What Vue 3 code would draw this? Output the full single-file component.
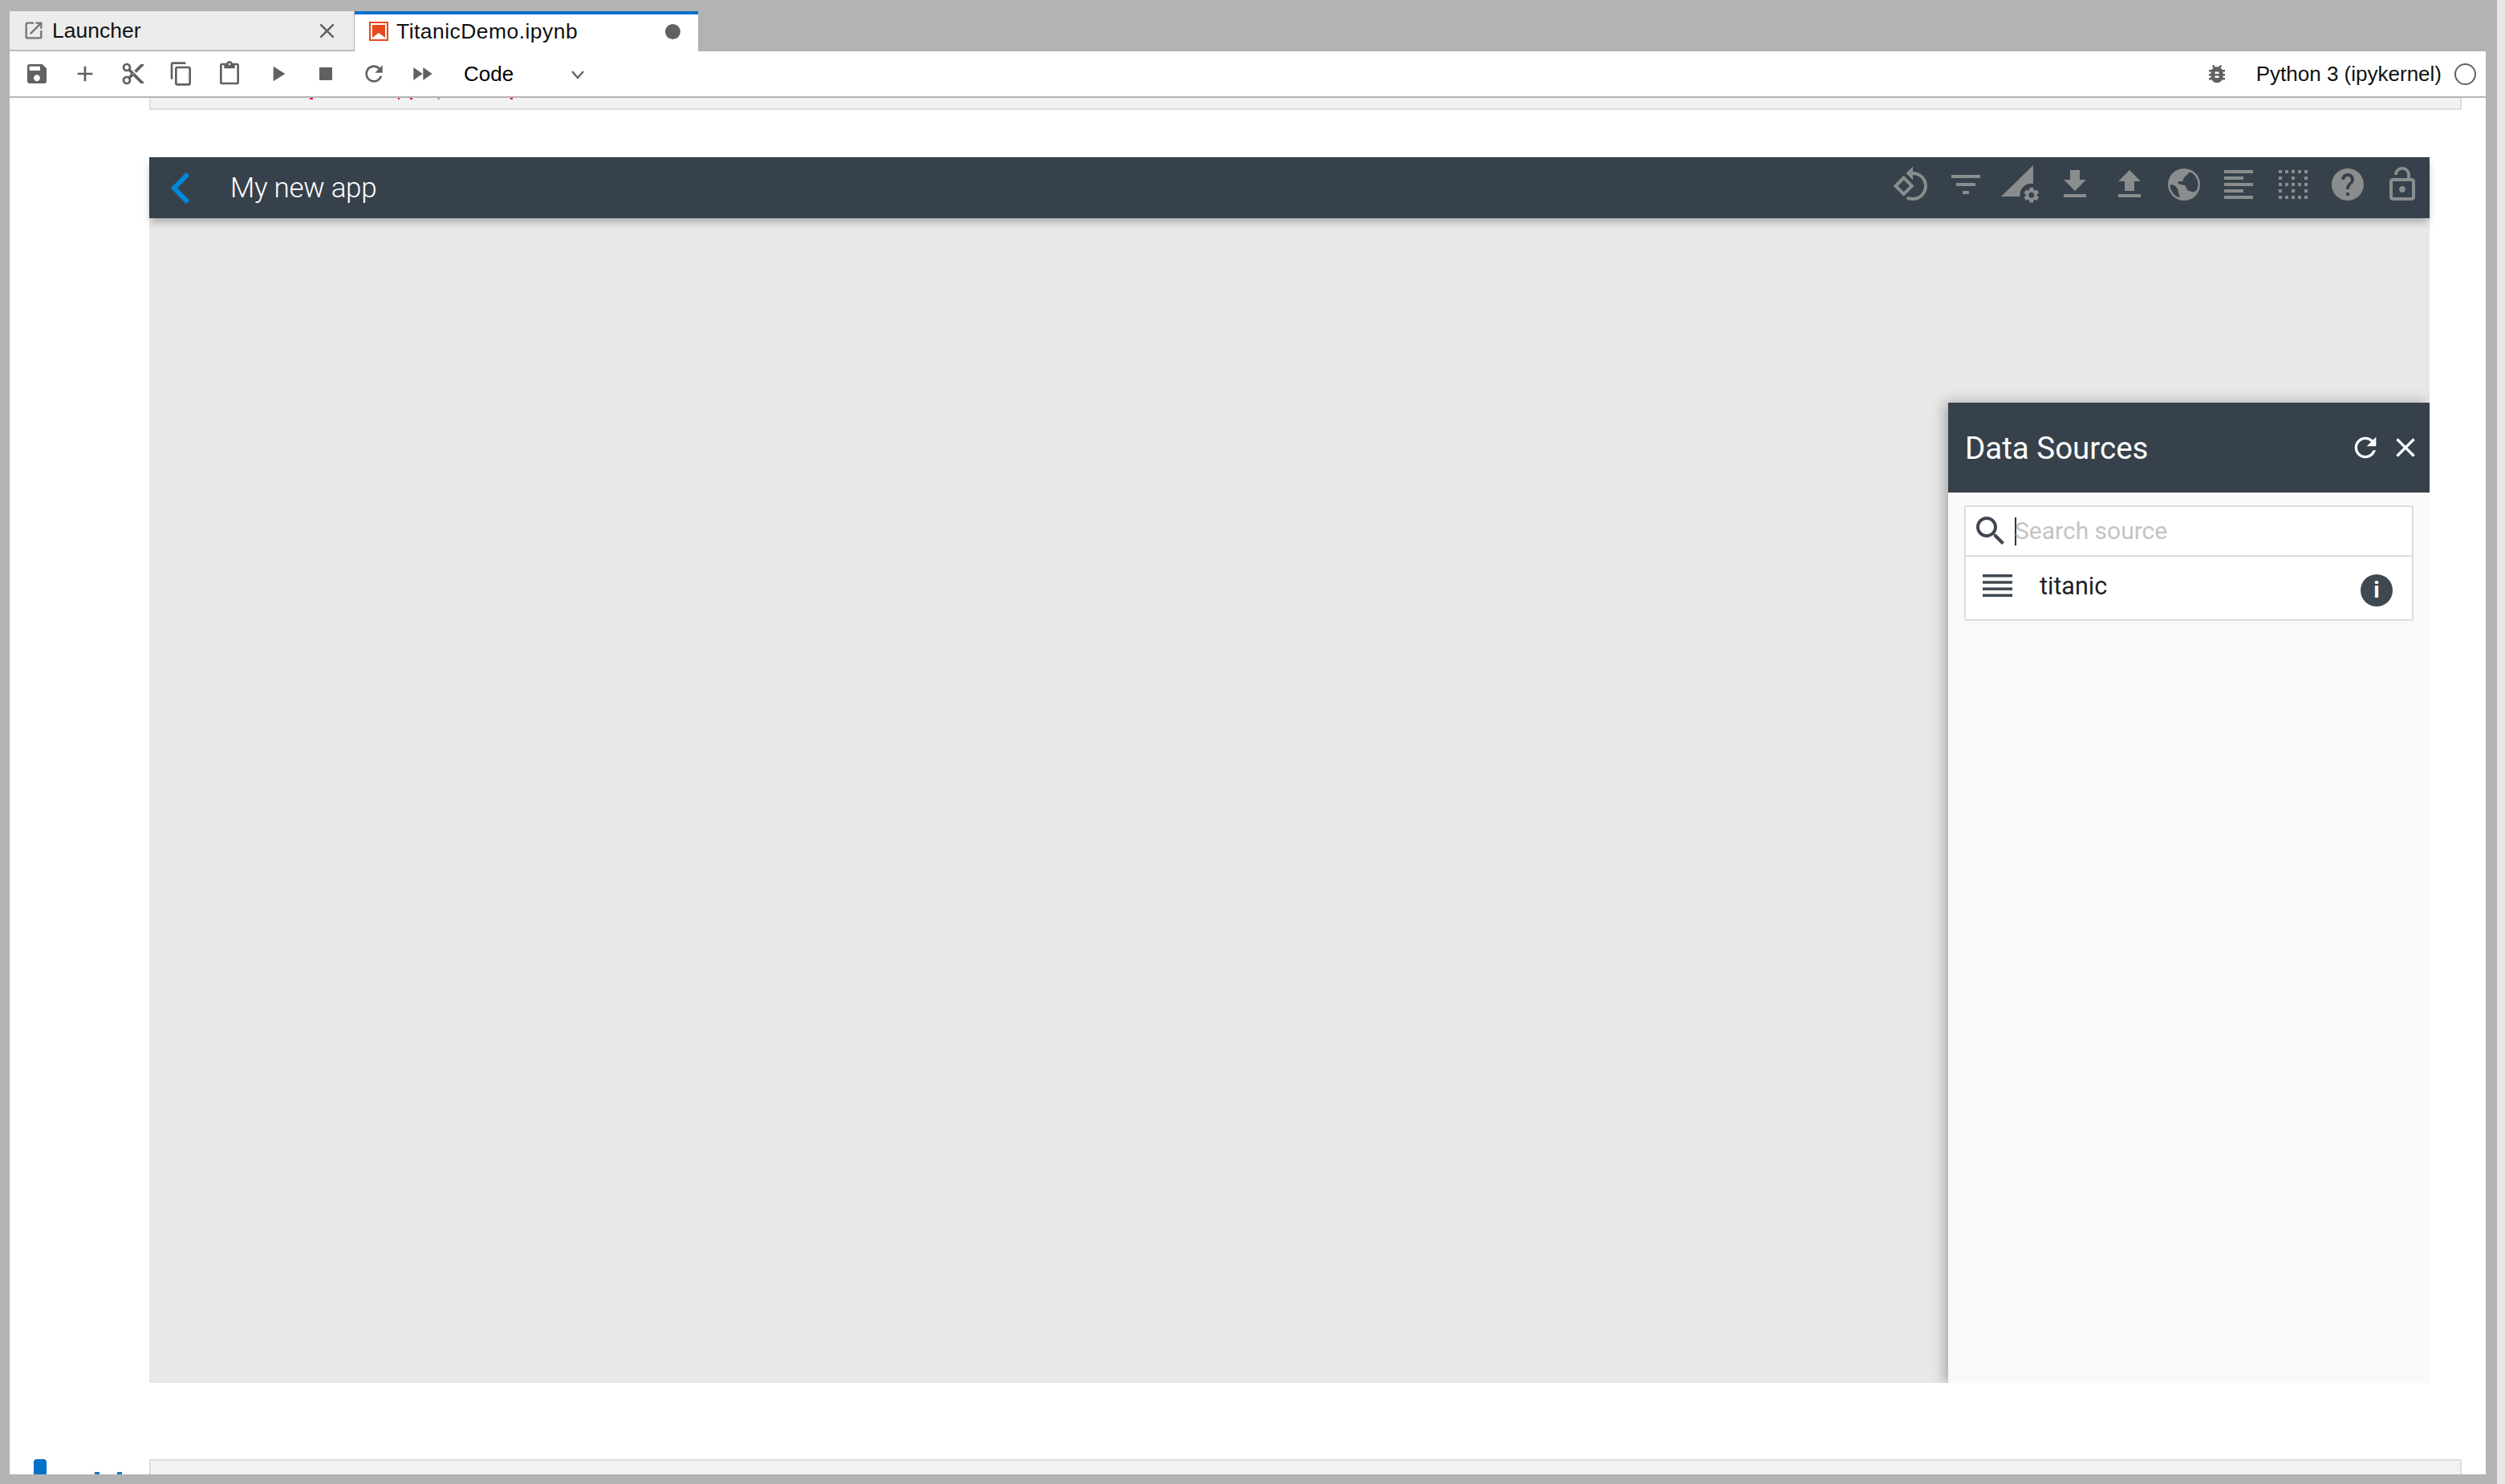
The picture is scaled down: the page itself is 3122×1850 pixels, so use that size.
<script setup>
const toolIcons = [
  'M17 3H5c-1.11 0-2 .9-2 2v14c0 1.1.89 2 2 2h14c1.1 0 2-.9 2-2V7l-4-4zm-5 16c-1.66 0-3-1.34-3-3s1.34-3 3-3 3 1.34 3 3-1.34 3-3 3zm3-10H5V5h10v4z',
  'M19 13h-6v6h-2v-6H5v-2h6V5h2v6h6v2z',
  'M9.64 7.64c.23-.5.36-1.05.36-1.64 0-2.21-1.79-4-4-4S2 3.79 2 6s1.79 4 4 4c.59 0 1.14-.13 1.64-.36L10 12l-2.36 2.36C7.14 14.13 6.59 14 6 14c-2.21 0-4 1.79-4 4s1.79 4 4 4 4-1.79 4-4c0-.59-.13-1.14-.36-1.64L12 14l7 7h3v-1L9.64 7.64zM6 8c-1.1 0-2-.89-2-2s.9-2 2-2 2 .89 2 2-.9 2-2 2zm0 12c-1.1 0-2-.89-2-2s.9-2 2-2 2 .89 2 2-.9 2-2 2zm6-7.5c-.28 0-.5-.22-.5-.5s.22-.5.5-.5.5.22.5.5-.22.5-.5.5zM19 3l-6 6 2 2 7-7V3z',
  'M16 1H4c-1.1 0-2 .9-2 2v14h2V3h12V1zm3 4H8c-1.1 0-2 .9-2 2v14c0 1.1.9 2 2 2h11c1.1 0 2-.9 2-2V7c0-1.1-.9-2-2-2zm0 16H8V7h11v14z',
  'M19 2h-4.18C14.4.84 13.3 0 12 0c-1.3 0-2.4.84-2.82 2H5c-1.1 0-2 .9-2 2v16c0 1.1.9 2 2 2h14c1.1 0 2-.9 2-2V4c0-1.1-.9-2-2-2zm-7 0c.55 0 1 .45 1 1s-.45 1-1 1-1-.45-1-1 .45-1 1-1zm7 18H5V4h2v3h10V4h2v16z',
  'M8 5v14l11-7z',
  'M6 6h12v12H6z',
  'M17.65 6.35C16.2 4.9 14.21 4 12 4c-4.42 0-7.99 3.58-7.99 8s3.57 8 7.99 8c3.73 0 6.84-2.55 7.73-6h-2.08c-.82 2.33-3.04 4-5.65 4-3.31 0-6-2.69-6-6s2.69-6 6-6c1.66 0 3.14.69 4.22 1.78L13 11h7V4l-2.35 2.35z',
  'M4 18l8.5-6L4 6v12zm9-12v12l8.5-6L13 6z'
]

const closePath = 'M19 6.41L17.59 5 12 10.59 6.41 5 5 6.41 10.59 12 5 17.59 6.41 19 12 13.41 17.59 19 19 17.59 13.41 12z'
const refreshPath = toolIcons[7]
const gearPath = 'M19.14 12.94c.04-.3.06-.61.06-.94 0-.32-.02-.64-.07-.94l2.03-1.58c.18-.14.23-.41.12-.61l-1.92-3.32c-.12-.22-.37-.29-.59-.22l-2.39.96c-.5-.38-1.03-.7-1.62-.94l-.36-2.54c-.04-.24-.24-.41-.48-.41h-3.84c-.24 0-.43.17-.47.41l-.36 2.54c-.59.24-1.13.57-1.62.94l-2.39-.96c-.22-.08-.47 0-.59.22L2.74 8.87c-.12.21-.08.47.12.61l2.03 1.58c-.05.3-.09.63-.09.94s.02.64.07.94l-2.03 1.58c-.18.14-.23.41-.12.61l1.92 3.32c.12.22.37.29.59.22l2.39-.96c.5.38 1.03.7 1.62.94l.36 2.54c.05.24.24.41.48.41h3.84c.24 0 .44-.17.47-.41l.36-2.54c.59-.24 1.13-.56 1.62-.94l2.39.96c.22.08.47 0 .59-.22l1.92-3.32c.12-.22.07-.47-.12-.61l-2.01-1.58zM12 15.6c-1.98 0-3.6-1.62-3.6-3.6s1.62-3.6 3.6-3.6 3.6 1.62 3.6 3.6-1.62 3.6-3.6 3.6z'

const appIconsLeft = [
  'M7.34 6.41L.86 12.9l6.49 6.48 6.49-6.48-6.5-6.49zM3.69 12.9l3.66-3.66L11 12.9l-3.66 3.66-3.65-3.66zm15.67-6.26C17.61 4.88 15.3 4 13 4V.76L8.76 5 13 9.24V6c1.79 0 3.58.68 4.95 2.05 2.73 2.73 2.73 7.17 0 9.9C16.58 19.32 14.79 20 13 20c-.97 0-1.94-.21-2.84-.61l-1.49 1.49C10.02 21.62 11.51 22 13 22c2.3 0 4.61-.88 6.36-2.64 3.52-3.51 3.52-9.21 0-12.72z',
  'M10 18h4v-2h-4v2zM3 6v2h18V6H3zm3 7h12v-2H6v2z'
]
const appIconsRight = [
  'M19 9h-4V3H9v6H5l7 7 7-7zM5 18v2h14v-2H5z',
  'M9 16h6v-6h4l-7-7-7 7h4v6zm-4 2h14v2H5v-2z',
  // globe: disc with two land cut-outs
  'M12 2a10 10 0 1 0 0 20a10 10 0 1 0 0-20zM15.7 4.1L12.2 7.5L11 10L8 10.3L8.7 11.7L12.7 12.5L14.3 15.8L17.7 16.7L19.8 15.8A8.7 8.7 0 0 0 15.7 4.1zM3.3 12L6 12.5L8 14.7L8.7 17.5L9.3 20.3A8.7 8.7 0 0 1 3.3 12z',
  'M15 15H3v2h12v-2zm0-8H3v2h12V7zM3 13h18v-2H3v2zm0 8h18v-2H3v2zM3 3v2h18V3H3z',
  'M7 5h2V3H7v2zm0 8h2v-2H7v2zm0 8h2v-2H7v2zm4-4h2v-2h-2v2zm0 4h2v-2h-2v2zm-8 0h2v-2H3v2zm0-4h2v-2H3v2zm0-4h2v-2H3v2zm0-4h2V7H3v2zm0-4h2V3H3v2zm8 8h2v-2h-2v2zm8 4h2v-2h-2v2zm0-4h2v-2h-2v2zm0 8h2v-2h-2v2zm0-12h2V7h-2v2zm-8 0h2V7h-2v2zm8-6v2h2V3h-2zm-8 2h2V3h-2v2zm4 16h2v-2h-2v2zm0-8h2v-2h-2v2zm0-8h2V3h-2v2z',
  'M12 2C6.48 2 2 6.48 2 12s4.48 10 10 10 10-4.48 10-10S17.52 2 12 2zm1 17h-2v-2h2v2zm2.07-7.75l-.9.92C13.45 12.9 13 13.5 13 15h-2v-.5c0-1.1.45-2.1 1.17-2.83l1.24-1.26c.37-.36.59-.86.59-1.41 0-1.1-.9-2-2-2s-2 .9-2 2H8c0-2.21 1.79-4 4-4s4 1.79 4 4c0 .88-.36 1.68-.93 2.25z',
  'M12 17c1.1 0 2-.9 2-2s-.9-2-2-2-2 .9-2 2 .9 2 2 2zm6-9h-1V6c0-2.76-2.24-5-5-5S7 3.24 7 6h1.9c0-1.71 1.39-3.1 3.1-3.1 1.71 0 3.1 1.39 3.1 3.1v2H6c-1.1 0-2 .9-2 2v10c0 1.1.9 2 2 2h12c1.1 0 2-.9 2-2V10c0-1.1-.9-2-2-2zm0 12H6V10h12v10z'
]

// tops of the code line hidden behind the toolbar
const codeMarks = [
  { left: 198, width: 4, color: '#e0102f' },
  { left: 308, width: 2, color: '#e0102f' },
  { left: 323, width: 3, color: '#e0102f' },
  { left: 357, width: 3, color: '#aaa' },
  { left: 448, width: 3, color: '#e0102f' }
]
</script>

<template>
  <div class="screen">
    <div class="frame">
      <div class="tabs">
        <div class="tab launcher">
          <svg class="tab-icon" viewBox="0 0 24 24"><path fill="#757575" d="M19 19H5V5h7V3H5c-1.11 0-2 .9-2 2v14c0 1.1.89 2 2 2h14c1.1 0 2-.9 2-2v-7h-2v7zM14 3v2h3.59l-9.83 9.83 1.41 1.41L19 6.41V10h2V3h-7z" /></svg>
          <span class="tab-label">Launcher</span>
          <svg class="tab-close" viewBox="0 0 24 24"><path fill="#616161" :d="closePath" /></svg>
        </div>
        <div class="tab active">
          <svg class="tab-icon" viewBox="0 0 24 24">
            <rect x="1" y="1" width="22" height="22" fill="#fff" stroke="#e8491a" stroke-width="2" />
            <rect x="4" y="4" width="16" height="16" fill="#e8491a" />
            <path fill="#fff" d="M4 20l8-6 8 6z" />
          </svg>
          <span class="tab-label">TitanicDemo.ipynb</span>
          <span class="dirty"></span>
        </div>
      </div>

      <div class="toolbar">
        <div class="tool-group">
          <svg v-for="d in toolIcons" :key="d" class="tool-icon" viewBox="0 0 24 24"><path fill="#616161" :d="d" /></svg>
        </div>
        <div class="cell-type">
          <span>Code</span>
          <svg class="chevron" viewBox="0 0 18 12"><path d="M2 2l7 8 7-8" fill="none" stroke="#616161" stroke-width="2.4" /></svg>
        </div>
        <svg class="bug" viewBox="0 0 24 24"><path fill="#616161" d="M20 8h-2.81c-.45-.78-1.07-1.45-1.82-1.96L17 4.41 15.59 3l-2.17 2.17C12.96 5.06 12.49 5 12 5c-.49 0-.96.06-1.41.17L8.41 3 7 4.41l1.62 1.63C7.88 6.55 7.26 7.22 6.81 8H4v2h2.09c-.05.33-.09.66-.09 1v1H4v2h2v1c0 .34.04.67.09 1H4v2h2.81c1.04 1.79 2.97 3 5.19 3s4.15-1.21 5.19-3H20v-2h-2.09c.05-.33.09-.66.09-1v-1h2v-2h-2v-1c0-.34-.04-.67-.09-1H20V8zm-6 8h-4v-2h4v2zm0-4h-4v-2h4v2z" /></svg>
        <span class="kernel">Python 3 (ipykernel)</span>
        <span class="kernel-status"></span>
      </div>

      <div class="notebook">
        <div class="cell-stub top">
          <span
            v-for="m in codeMarks"
            :key="m.left"
            class="code-mark"
            :style="{ left: m.left + 'px', width: m.width + 'px', background: m.color }"
          ></span>
        </div>

        <section class="app">
          <header class="app-bar">
            <svg class="back" viewBox="0 0 24 39"><path d="M21 2L4 19.5 21 37" fill="none" stroke="#0089d6" stroke-width="6" /></svg>
            <span class="app-title">My new app</span>
            <div class="app-actions">
              <svg v-for="d in appIconsLeft" :key="d" class="app-icon" viewBox="0 0 24 24"><path fill="#8a8d8d" :d="d" /></svg>
              <svg class="app-icon" viewBox="0 0 24 24">
                <path fill="#8a8d8d" d="M0 19.5L20 0v19.5z" />
                <circle cx="18.9" cy="18.6" r="7.2" fill="#37414b" />
                <path fill="#8a8d8d" transform="translate(18.9 18.6) scale(.49) translate(-12 -12)" :d="gearPath" />
              </svg>
              <svg v-for="d in appIconsRight" :key="d" class="app-icon" viewBox="0 0 24 24"><path fill="#8a8d8d" fill-rule="evenodd" :d="d" /></svg>
            </div>
          </header>
          <div class="app-body">
            <aside class="panel">
              <div class="panel-head">
                <span class="panel-title">Data Sources</span>
                <svg class="panel-icon" viewBox="0 0 24 24"><path fill="#fff" :d="refreshPath" /></svg>
                <svg class="panel-icon" viewBox="0 0 24 24"><path fill="#fff" :d="closePath" /></svg>
              </div>
              <div class="sources">
                <div class="search">
                  <svg class="search-icon" viewBox="0 0 24 24"><path fill="#3f4850" d="M15.5 14h-.79l-.28-.27C15.41 12.59 16 11.11 16 9.5 16 5.91 13.09 3 9.5 3S3 5.91 3 9.5 5.91 16 9.5 16c1.61 0 3.09-.59 4.23-1.57l.27.28v.79l5 4.99L20.49 19l-4.99-5zm-6 0C7.01 14 5 11.99 5 9.5S7.01 5 9.5 5 14 7.01 14 9.5 11.99 14 9.5 14z" /></svg>
                  <span class="caret"></span>
                  <input class="search-input" placeholder="Search source" />
                </div>
                <div class="source-row">
                  <svg class="list-icon" viewBox="0 0 37 28">
                    <rect width="37" height="3.5" y="0" fill="#3f4850" />
                    <rect width="37" height="3.5" y="8.2" fill="#3f4850" />
                    <rect width="37" height="3.5" y="16.4" fill="#3f4850" />
                    <rect width="37" height="3.5" y="24.5" fill="#3f4850" />
                  </svg>
                  <span class="source-name">titanic</span>
                  <span class="info">i</span>
                </div>
              </div>
            </aside>
          </div>
        </section>

        <div class="next-cell">
          <div class="gutter">
            <span class="active-bar"></span>
            <span class="bracket first"></span>
            <span class="bracket"></span>
          </div>
          <div class="cell-stub bottom"></div>
        </div>
      </div>
    </div>
    <div class="edge"></div>
  </div>
</template>

<style scoped>
.screen {
  width: 3122px;
  height: 1850px;
  background: #b3b3b3;
  display: flex;
  overflow: hidden;
  font-family: "Liberation Sans", Arial, sans-serif;
}

.frame {
  width: 3086px;
  margin: 14px 0 12px 12px;
  display: flex;
  flex-direction: column;
  min-height: 0;
}

.edge {
  width: 10px;
  margin-left: 14px;
  background: #e8e8e8;
}

.tabs {
  display: flex;
  gap: 1px;
  height: 50px;
  flex: none;
}

.tab {
  display: flex;
  align-items: center;
  box-sizing: border-box;
  height: 50px;
  font-size: 26.5px;
  color: #000;
}

.launcher {
  width: 429px;
  padding: 0 18px 0 16px;
  background: #ececec;
  border-bottom: 2px solid #bdbdbd;
}

.active {
  width: 428px;
  padding: 0 22px 4px 18px;
  background: #fff;
  border-top: 4px solid #0070c9;
}

.tab-icon {
  width: 28px;
  height: 28px;
  flex: none;
}

.active .tab-icon {
  width: 24px;
  height: 24px;
}

.tab-label {
  flex: 1;
  margin-left: 9px;
  color: #111;
}

.active .tab-label {
  margin-left: 10px;
  letter-spacing: 0.45px;
}

.tab-close {
  width: 31px;
  height: 31px;
}

.dirty {
  width: 19px;
  height: 19px;
  border-radius: 50%;
  background: #616161;
}

.toolbar {
  height: 58px;
  flex: none;
  box-sizing: border-box;
  display: flex;
  align-items: center;
  padding: 0 12px 0 18px;
  background: #fff;
  border-bottom: 2px solid #b5b5b5;
  position: relative;
  z-index: 1;
}

.tool-group {
  display: flex;
  gap: 28px;
}

.tool-icon {
  width: 32px;
  height: 32px;
}

.cell-type {
  display: flex;
  align-items: center;
  width: 151px;
  margin-left: 36px;
  font-size: 26px;
  color: #000;
}

.cell-type span {
  flex: 1;
}

.chevron {
  width: 18px;
  height: 12px;
  margin: 2px 0 0 0;
}

.bug {
  width: 30px;
  height: 30px;
  margin-left: auto;
}

.kernel {
  margin-left: 34px;
  font-size: 26px;
  color: #111;
}

.kernel-status {
  width: 23px;
  height: 23px;
  margin-left: 16px;
  border: 2px solid #616161;
  border-radius: 50%;
}

.notebook {
  flex: 1;
  min-height: 0;
  overflow: hidden;
  background: #fff;
}

.cell-stub {
  background: #f2f2f2;
  border: 2px solid #ddd;
  box-sizing: border-box;
}

.cell-stub.top {
  height: 15px;
  margin: 0 30px 0 174px;
  border-top: 0;
  position: relative;
}

.code-mark {
  position: absolute;
  top: 0;
  height: 2px;
}

.app {
  margin: 59px 70px 0 174px;
}

.app-bar {
  height: 76px;
  display: flex;
  align-items: center;
  padding-right: 10px;
  background: #37414b;
  box-shadow: 0 6px 10px -2px rgba(0, 0, 0, 0.3);
  position: relative;
  z-index: 1;
}

.back {
  width: 24px;
  height: 39px;
  margin: 0 0 0 27px;
}

.app-title {
  margin-left: 50px;
  font-family: Roboto, sans-serif;
  font-weight: 300;
  font-size: 35px;
  letter-spacing: -0.3px;
  color: #fff;
}

.app-actions {
  display: flex;
  gap: 20px;
  margin-left: auto;
  padding-bottom: 8px;
}

.app-icon {
  width: 48px;
  height: 48px;
  overflow: visible;
}

.app-body {
  height: 1452px;
  background: #e8e8e8;
  position: relative;
  overflow: hidden;
}

.panel {
  position: absolute;
  top: 230px;
  right: 0;
  bottom: 0;
  width: 600px;
  background: #f9f9f9;
  box-shadow: -4px 0 16px rgba(0, 0, 0, 0.3);
  font-family: Roboto, sans-serif;
}

.panel-head {
  height: 112px;
  display: flex;
  align-items: center;
  gap: 10px;
  padding: 0 10px 0 21px;
  background: #37414b;
  color: #fff;
}

.panel-title {
  flex: 1;
  font-size: 38.5px;
}

.panel-icon {
  width: 40px;
  height: 40px;
}

.sources {
  margin: 16px 20px 0;
  background: #fff;
  border: 2px solid #ddd;
  border-radius: 3px;
}

.search {
  height: 60px;
  display: flex;
  align-items: center;
  padding-left: 7px;
  border-bottom: 2px solid #ddd;
}

.search-icon {
  width: 48px;
  height: 48px;
  flex: none;
}

.caret {
  width: 2px;
  height: 35px;
  flex: none;
  margin-left: 6px;
  background: #333;
}

.search-input {
  flex: 1;
  min-width: 0;
  padding: 0 0 2px;
  margin-left: -2px;
  border: 0;
  outline: 0;
  background: transparent;
  font-family: Roboto, sans-serif;
  font-size: 30px;
}

.search-input::placeholder {
  color: #c4c4c4;
  opacity: 1;
}

.source-row {
  height: 78px;
  display: flex;
  align-items: center;
  padding: 0 24px 0 21px;
}

.list-icon {
  width: 37px;
  height: 28px;
  flex: none;
  margin-bottom: 6px;
}

.source-name {
  flex: 1;
  margin: 0 0 6px 34px;
  font-size: 30.5px;
  color: #222;
}

.info {
  width: 40px;
  height: 40px;
  margin-top: 5px;
  border-radius: 50%;
  background: #3f4850;
  color: #fff;
  font-weight: 700;
  font-size: 28px;
  line-height: 40px;
  text-align: center;
}

.next-cell {
  display: flex;
  margin-top: 95px;
}

.gutter {
  width: 174px;
  height: 40px;
  flex: none;
  position: relative;
}

.active-bar {
  position: absolute;
  left: 30px;
  top: 0;
  width: 16px;
  height: 40px;
  border-radius: 4px 4px 0 0;
  background: #0070c9;
}

.bracket {
  position: absolute;
  left: 134px;
  top: 16px;
  width: 6px;
  height: 10px;
  background: #1976b8;
}

.bracket.first {
  left: 106px;
}

.cell-stub.bottom {
  flex: none;
  width: 2882px;
  height: 60px;
}
</style>
